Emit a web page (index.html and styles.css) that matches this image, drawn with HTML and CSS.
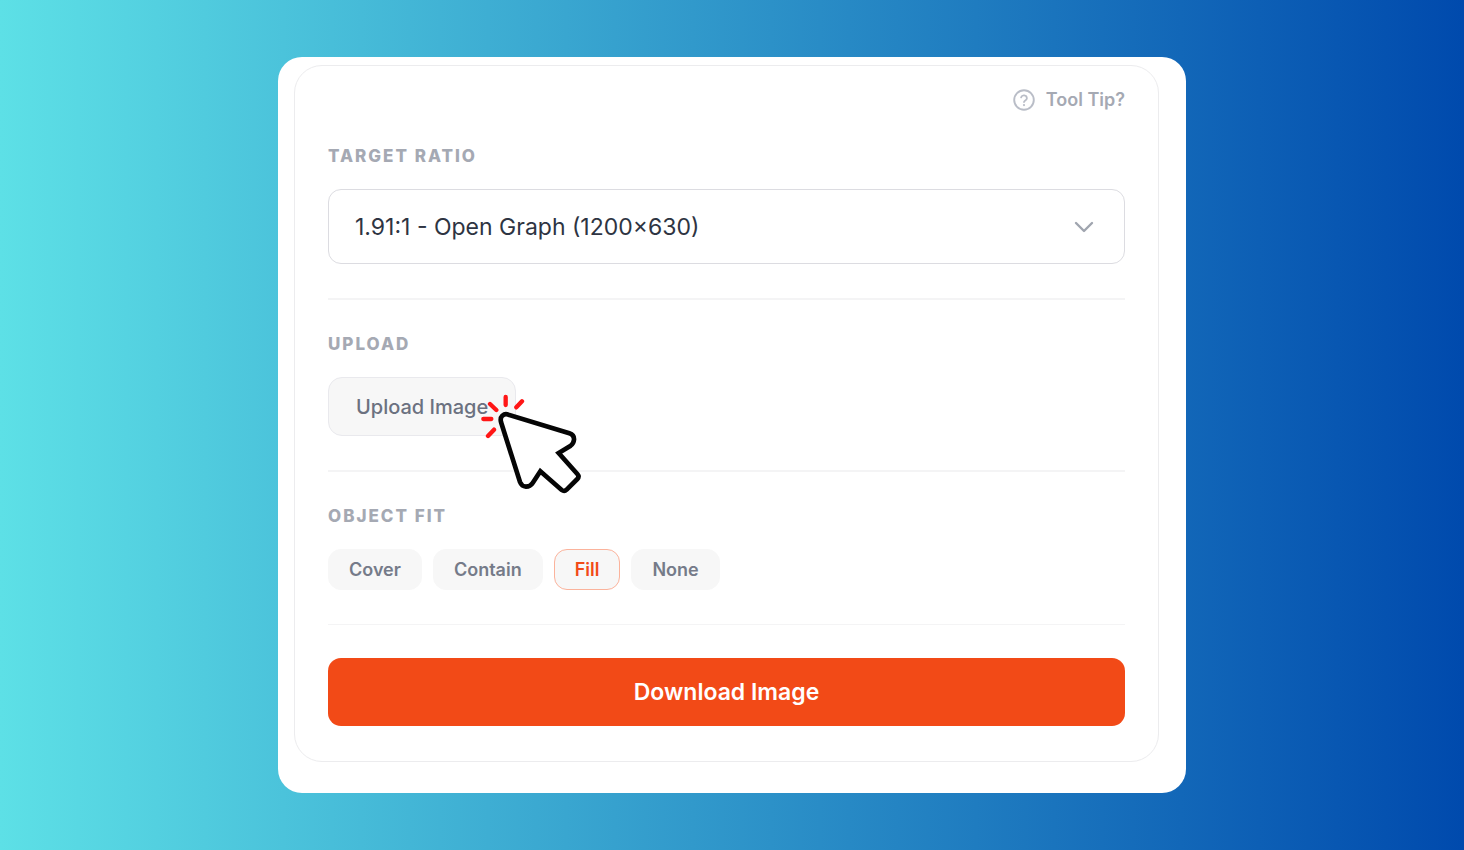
FILE: index.html
```html
<!DOCTYPE html>
<html lang="en">
<head>
  <meta charset="UTF-8" />
  <meta name="viewport" content="width=device-width, initial-scale=1.0" />
  <title>Image Ratio Tool</title>
  <link rel="stylesheet" href="styles.css">
</head>
<body>
  <main class="panel">
    <form class="card">
      <div class="tooltip-row">
        <a href="#" class="tooltip-link">
          <svg class="help-icon" viewBox="0 0 22 22" fill="none" stroke="currentColor" stroke-linecap="round" stroke-linejoin="round" aria-hidden="true">
            <circle cx="11" cy="11" r="9.8" stroke-width="1.9" />
            <path d="M8.1 8.4a3 3 0 0 1 5.8.8c0 2-2.9 2.3-2.9 3.8" stroke-width="1.8" />
            <path d="M11 16v.1" stroke-width="2.2" />
          </svg>
          Tool Tip?
        </a>
      </div>

      <section class="section">
        <label class="section-label" for="ratio">TARGET RATIO</label>
        <div class="select-wrap">
          <select class="select" id="ratio">
            <option>1.91:1 - Open Graph (1200×630)</option>
          </select>
          <svg class="chevron" viewBox="0 0 20 12" fill="none" stroke="currentColor" stroke-width="2.4" stroke-linecap="round" stroke-linejoin="round" aria-hidden="true">
            <path d="M2 2l8 8 8-8" />
          </svg>
        </div>
      </section>

      <section class="section">
        <h2 class="section-label">UPLOAD</h2>
        <div class="upload-wrap">
          <button type="button" class="btn-upload">Upload Image</button>
          <svg class="cursor" viewBox="30 15 312 318" fill="none" stroke-linecap="round" aria-hidden="true">
            <path d="M115 89L298 145Q313 150 312 164Q311 176 302 182L266 204L322 267Q329 275 322 282L290 314Q283 321 275 315L211 259L188 294Q181 305 168 305Q155 304 150 291L93 111Q90 99 97 92Q105 85 115 89Z" fill="#fff" stroke="#050505" stroke-width="14" stroke-linejoin="miter" />
            <path d="M107 36v24M156 49l-17 18M60 57l19 18M40 102h24M72 134l-18 19" stroke="#ff1616" stroke-width="13" />
          </svg>
        </div>
      </section>

      <section class="section section-last">
        <h2 class="section-label">OBJECT FIT</h2>
        <div class="fit-options">
          <button type="button" class="fit">Cover</button>
          <button type="button" class="fit">Contain</button>
          <button type="button" class="fit active">Fill</button>
          <button type="button" class="fit">None</button>
        </div>
      </section>

      <button type="button" class="btn-download">Download Image</button>
    </form>
  </main>
</body>
</html>
```
FILE: styles.css
```css
* {
  box-sizing: border-box;
  margin: 0;
  padding: 0;
  font-family: Inter, 'Liberation Sans', sans-serif;
}

body {
  min-height: 100vh;
  display: flex;
  align-items: center;
  justify-content: center;
  background: linear-gradient(to right, #5de0e6, #004aad);
}

.panel {
  width: 100%;
  max-width: 908px;
  padding: 8px 27px 31px 16px;
  background-color: #fff;
  border-radius: 24px;
}

.card {
  padding: 21px 33px 35px;
  border: 1px solid #ececee;
  border-radius: 28px;
}

.tooltip-row {
  display: flex;
  justify-content: flex-end;
}

.tooltip-link {
  display: flex;
  align-items: center;
  gap: 11px;
  color: #a5a9b3;
  font-size: 18px;
  font-weight: 600;
  line-height: 25px;
  text-decoration: none;
}

.help-icon {
  width: 22px;
  height: 22px;
  color: #b9bdc7;
}

.section {
  padding: 34px 0;
  border-bottom: 2px solid #f4f4f5;
}

.section-last {
  border-bottom-width: 1px;
}

.section-label {
  display: block;
  margin-bottom: 23px;
  color: #a5a9b3;
  font-size: 17px;
  font-weight: 800;
  line-height: 20px;
  letter-spacing: 2px;
}

.select-wrap {
  position: relative;
}

.select {
  display: block;
  width: 100%;
  height: 75px;
  padding: 0 60px 0 26px;
  appearance: none;
  background-color: #fff;
  border: 1px solid #dcdce1;
  border-radius: 13px;
  color: #2e3442;
  font-size: 23px;
}

.chevron {
  position: absolute;
  top: 32px;
  right: 31px;
  width: 20px;
  height: 12px;
  color: #a0a5af;
  pointer-events: none;
}

.upload-wrap {
  position: relative;
  display: flex;
}

.btn-upload {
  height: 59px;
  padding: 0 27px;
  background-color: #f7f7f7;
  border: 1px solid #e9e9ed;
  border-radius: 14px;
  color: #6b7180;
  font-size: 20px;
  font-weight: 500;
  cursor: pointer;
}

.cursor {
  position: absolute;
  left: 152px;
  top: 13px;
  width: 104px;
  height: 106px;
  pointer-events: none;
}

.fit-options {
  display: flex;
  flex-wrap: wrap;
  gap: 11px;
}

.fit {
  height: 41px;
  padding: 0 20px;
  background-color: #f7f7f7;
  border: 1px solid #f7f7f7;
  border-radius: 13px;
  color: #757b89;
  font-size: 18px;
  font-weight: 600;
  cursor: pointer;
}

.fit.active {
  border-color: #fbb39c;
  color: #f24a17;
}

.btn-download {
  display: block;
  width: 100%;
  height: 68px;
  margin-top: 33px;
  background-color: #f24a17;
  border: none;
  border-radius: 13px;
  color: #fff;
  font-size: 23px;
  font-weight: 600;
  cursor: pointer;
}
```
